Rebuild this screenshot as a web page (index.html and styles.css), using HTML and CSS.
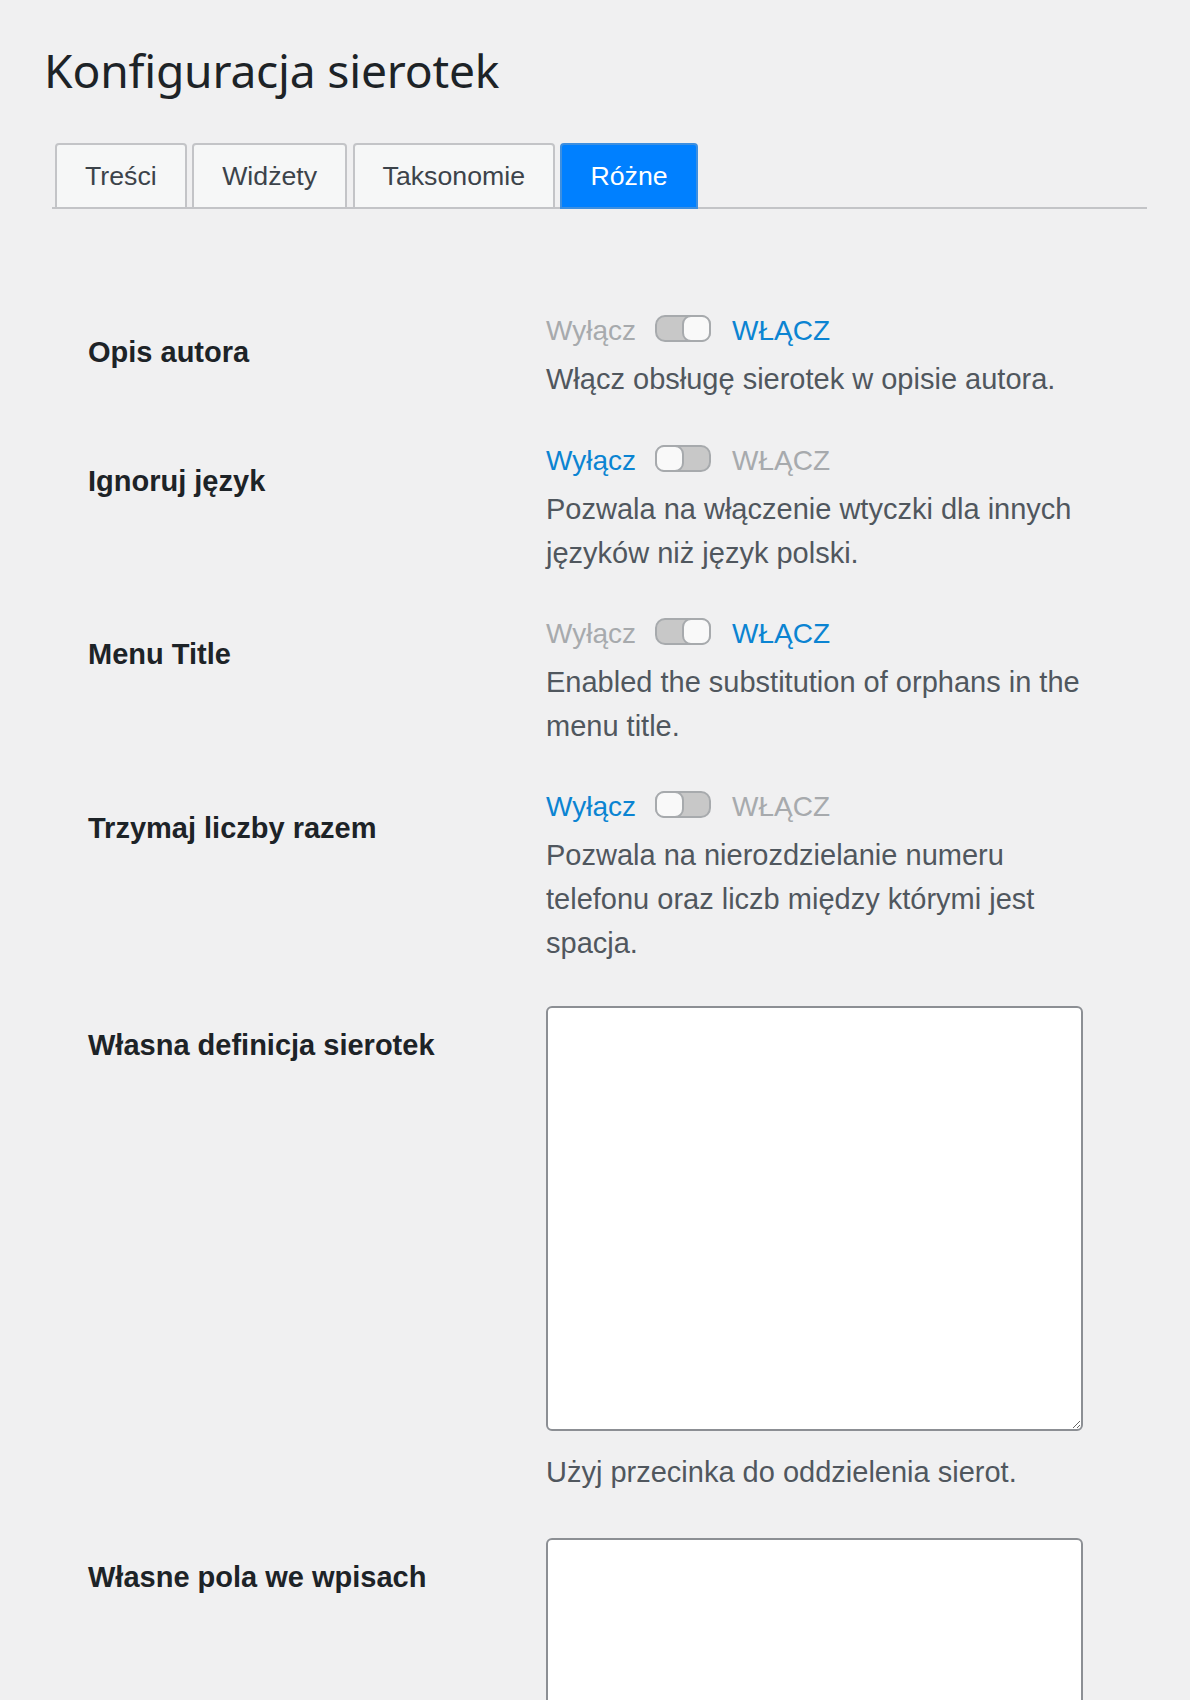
FILE: index.html
```html
<!DOCTYPE html>
<html lang="pl">
<head>
<meta charset="utf-8">
<title>Konfiguracja sierotek</title>
<link rel="stylesheet" href="styles.css">
</head>
<body>
<div class="wrap">
  <h1 class="title">Konfiguracja sierotek</h1>
  <nav class="tabs">
    <a class="tab">Treści</a>
    <a class="tab">Widżety</a>
    <a class="tab">Taksonomie</a>
    <a class="tab tab-active">Różne</a>
  </nav>
  <div class="form">
    <div class="row">
      <div class="label">Opis autora</div>
      <div class="field">
        <div class="switch-line">
          <span class="sw-text">Wyłącz</span>
          <span class="switch switch-on"><span class="knob"></span></span>
          <span class="sw-text sw-active">WŁĄCZ</span>
        </div>
        <p class="desc">Włącz obsługę sierotek w opisie autora.</p>
      </div>
    </div>
    <div class="row">
      <div class="label">Ignoruj język</div>
      <div class="field">
        <div class="switch-line">
          <span class="sw-text sw-active">Wyłącz</span>
          <span class="switch"><span class="knob"></span></span>
          <span class="sw-text">WŁĄCZ</span>
        </div>
        <p class="desc">Pozwala na włączenie wtyczki dla innych języków niż język polski.</p>
      </div>
    </div>
    <div class="row">
      <div class="label">Menu Title</div>
      <div class="field">
        <div class="switch-line">
          <span class="sw-text">Wyłącz</span>
          <span class="switch switch-on"><span class="knob"></span></span>
          <span class="sw-text sw-active">WŁĄCZ</span>
        </div>
        <p class="desc">Enabled the substitution of orphans in the menu title.</p>
      </div>
    </div>
    <div class="row">
      <div class="label">Trzymaj liczby razem</div>
      <div class="field">
        <div class="switch-line">
          <span class="sw-text sw-active">Wyłącz</span>
          <span class="switch"><span class="knob"></span></span>
          <span class="sw-text">WŁĄCZ</span>
        </div>
        <p class="desc">Pozwala na nierozdzielanie numeru telefonu oraz liczb między którymi jest spacja.</p>
      </div>
    </div>
    <div class="row row-wide">
      <div class="label">Własna definicja sierotek</div>
      <div class="field">
        <textarea class="area"></textarea>
        <p class="desc">Użyj przecinka do oddzielenia sierot.</p>
      </div>
    </div>
    <div class="row">
      <div class="label">Własne pola we wpisach</div>
      <div class="field">
        <textarea class="area"></textarea>
      </div>
    </div>
  </div>
</div>
</body>
</html>
```

FILE: styles.css
```css
html, body {
  margin: 0;
  padding: 0;
  background: #f0f0f1;
}

body {
  font-family: "Liberation Sans", Arial, sans-serif;
  color: #1d2327;
}

.wrap {
  padding: 40px 43px 0 44px;
}

.title {
  margin: 0;
  font-family: "Noto Sans", "Open Sans", sans-serif;
  font-weight: 400;
  font-size: 46.2px;
  line-height: 62px;
  letter-spacing: -0.2px;
  color: #1d2327;
}

.tabs {
  display: flex;
  gap: 5.5px;
  margin: 41px 0 0 8px;
  padding-left: 3px;
  border-bottom: 2px solid #c3c4c7;
}

.tab {
  display: block;
  margin-bottom: -2px;
  padding: 2px 28px 1.5px;
  line-height: 58px;
  font-size: 26.7px;
  color: #3c434a;
  background: #f6f7f7;
  border: 2px solid #c3c4c7;
  border-radius: 4px 4px 0 0;
  text-decoration: none;
}

.tab-active {
  background: #0080ff;
  border-color: #3d8fe0;
  color: #ffffff;
}

.form {
  margin: 104px 0 0 44px;
}

.row {
  display: grid;
  grid-template-columns: 458px 550px;
  margin-bottom: 40.6px;
}

.row-wide {
  margin-bottom: 43.6px;
}

.label {
  padding-top: 17px;
  font-size: 29px;
  line-height: 44px;
  font-weight: 700;
  color: #1d2327;
}

.field {
  min-width: 0;
}

.switch-line {
  display: flex;
  align-items: flex-start;
  height: 44px;
  margin: -3.4px 0 4.2px;
}

.sw-text {
  font-size: 28px;
  line-height: 44px;
  color: #a7aaad;
}

.sw-active {
  color: #0b84d2;
}

.switch {
  display: flex;
  box-sizing: border-box;
  width: 56px;
  height: 27px;
  margin: 6px 21px 0 19px;
  background: #c8c8c8;
  border: 2px solid #a7aaad;
  border-radius: 10px;
}

.switch-on {
  justify-content: flex-end;
}

.knob {
  box-sizing: border-box;
  width: 29px;
  height: 27px;
  margin: -2px;
  background: #f9f9f9;
  border: 2px solid #a7aaad;
  border-radius: 9px;
}

.desc {
  margin: 0;
  font-size: 29px;
  line-height: 44px;
  color: #50575e;
}

.area {
  display: block;
  box-sizing: border-box;
  width: 537px;
  height: 425px;
  margin: 0 0 19px;
  padding: 4px 8px;
  background: #ffffff;
  border: 2px solid #8c8f94;
  border-radius: 6px;
  font-family: "Liberation Sans", Arial, sans-serif;
  font-size: 28px;
}
```
